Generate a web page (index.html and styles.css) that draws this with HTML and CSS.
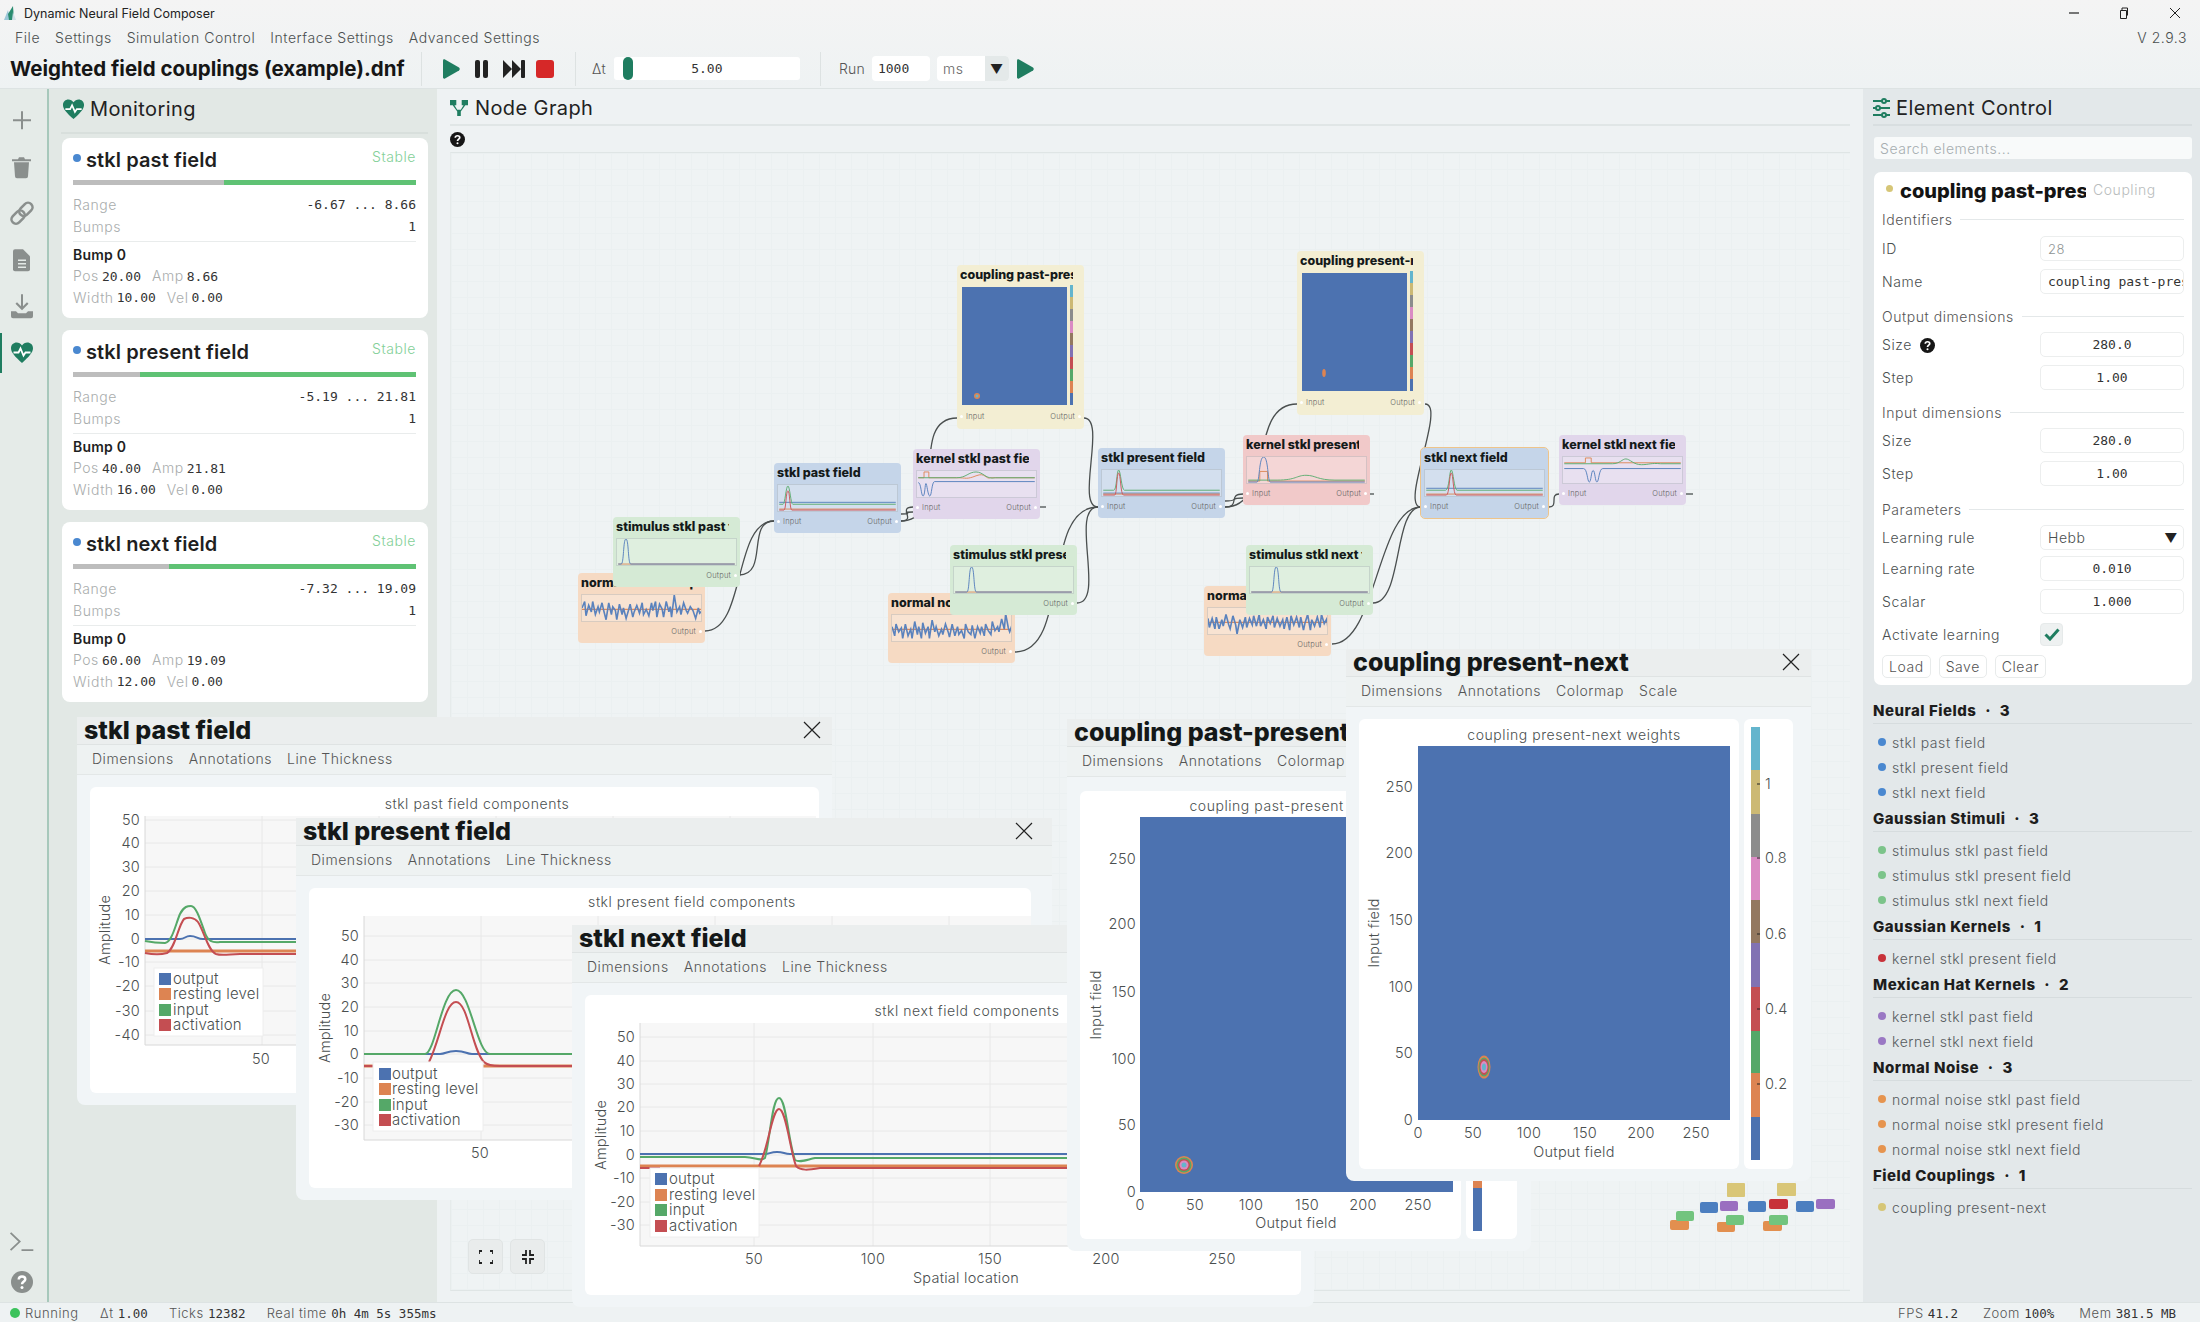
FILE: index.html
```html
<!DOCTYPE html>
<html lang="en">
<head>
    <meta charset="UTF-8">
    <title>Dynamic Neural Field Composer</title>
    <link rel="stylesheet" href="styles.css">
</head>
<body>

    <!-- Shared icons -->
    <svg class="icon-defs" width="0" height="0">
        <symbol id="i-heart" viewBox="0 0 24 24">
            <path fill="#1f7d60" d="M12 22C5 15.5 1 11.5 1 7.2 1 3.7 3.7 1.5 6.6 1.5c2.2 0 4.2 1.2 5.4 3 1.2-1.8 3.2-3 5.4-3 2.9 0 5.6 2.2 5.6 5.7C23 11.5 19 15.5 12 22z"/>
            <polyline fill="none" stroke="#fff" stroke-width="1.8" points="3.5,11.5 8.5,11.5 10.5,7.5 13.5,14.5 15.5,11.5 20.5,11.5"/>
        </symbol>
        <symbol id="i-help" viewBox="0 0 16 16">
            <circle cx="8" cy="8" r="8" fill="currentColor"/>
            <path fill="none" stroke="#fff" stroke-width="1.8" d="M5.6 6.2C5.7 4.6 6.8 4 8 4c1.4 0 2.4.8 2.4 2 0 1.6-2.4 1.7-2.4 3.6"/>
            <circle cx="8" cy="12" r="1.1" fill="#fff"/>
        </symbol>
        <symbol id="i-close" viewBox="0 0 18 18">
            <path fill="none" stroke="#222" stroke-width="1.2" d="M1 1L17 17M17 1L1 17"/>
        </symbol>
    </svg>

    <!-- Title bar -->
    <div class="titlebar">
        <svg class="app-logo" width="12" height="16" viewBox="0 0 12 16">
            <path fill="#9cc7d8" d="M0 15L4 5l2 10z"/>
            <path fill="#2a8c70" d="M4 9L9 1l1 14H5z"/>
            <path fill="#cfe0e6" d="M8 15l1-8 3 8z"/>
        </svg>
        <span class="app-name">Dynamic Neural Field Composer</span>
        <div class="window-buttons">
            <svg width="10" height="10" viewBox="0 0 10 10"><path stroke="#222" stroke-width="1.2" d="M0 5H10"/></svg>
            <svg width="10" height="12" viewBox="0 0 10 12"><path fill="none" stroke="#222" d="M1.5 3.5h6v8h-6zM3 3.5V1h5.5v7.5"/></svg>
            <svg width="12" height="12" viewBox="0 0 12 12"><path stroke="#222" d="M1 1L11 11M11 1L1 11"/></svg>
        </div>
    </div>

    <!-- Menu bar -->
    <div class="menubar">
        <span>File</span>
        <span>Settings</span>
        <span>Simulation Control</span>
        <span>Interface Settings</span>
        <span>Advanced Settings</span>
        <span class="version">V 2.9.3</span>
    </div>

    <!-- Toolbar -->
    <div class="toolbar">
        <div class="file-name">Weighted field couplings (example).dnf</div>
        <div class="tool-group transport">
            <svg width="18" height="20" viewBox="0 0 18 20"><path fill="#1f7d60" d="M1 1.5C1 .5 2 0 3 .5l14 8c1 .6 1 2.4 0 3l-14 8c-1 .5-2 0-2-1z"/></svg>
            <svg width="15" height="20" viewBox="0 0 15 20"><rect x="1" y="1" width="5" height="18" rx="2" fill="#222"/><rect x="9" y="1" width="5" height="18" rx="2" fill="#222"/></svg>
            <svg width="23" height="20" viewBox="0 0 23 20"><path fill="#222" d="M0 1l9 9-9 9zM9 1l9 9-9 9z"/><rect x="18" y="1" width="4" height="18" rx="1" fill="#222"/></svg>
            <svg class="stop-icon" width="18" height="18" viewBox="0 0 18 18"><rect width="18" height="18" rx="3" fill="#d62828"/></svg>
        </div>
        <div class="tool-group delta">
            <span class="tool-label">Δt</span>
            <div class="slider"><i class="slider-grab"></i><span class="mono">5.00</span></div>
        </div>
        <div class="tool-group run">
            <span class="tool-label">Run</span>
            <div class="field run-ms mono">1000</div>
            <div class="field run-unit"><span>ms</span><b>▼</b></div>
            <svg width="18" height="20" viewBox="0 0 18 20"><path fill="#1f7d60" d="M1 1.5C1 .5 2 0 3 .5l14 8c1 .6 1 2.4 0 3l-14 8c-1 .5-2 0-2-1z"/></svg>
        </div>
    </div>

    <div class="main">

        <!-- Icon sidebar -->
        <div class="sidebar">
            <svg class="side-icon" width="18" viewBox="0 0 18 18"><path stroke="#8a8f8d" stroke-width="2" d="M9 0V18M0 9H18"/></svg>
            <svg class="side-icon" width="19" viewBox="0 0 19 22"><path fill="#8a8f8d" d="M2 6h15l-1 14a2 2 0 0 1-2 2H5a2 2 0 0 1-2-2zM0 3h6l1-2h5l1 2h6v2H0z"/></svg>
            <svg class="side-icon" width="26" viewBox="0 0 26 24"><g transform="rotate(-45 13 12)" fill="none" stroke="#8a8f8d" stroke-width="2.6"><rect x="0" y="7.5" width="15" height="9" rx="4.5"/><rect x="11" y="7.5" width="15" height="9" rx="4.5"/></g></svg>
            <svg class="side-icon" width="17" viewBox="0 0 17 22"><path fill="#8a8f8d" d="M2 0h8l7 7v13a2 2 0 0 1-2 2H2a2 2 0 0 1-2-2V2a2 2 0 0 1 2-2z"/><path stroke="#e3e9e6" stroke-width="1.5" d="M5 11h8M5 14.5h8M5 18h8"/></svg>
            <svg class="side-icon" width="22" viewBox="0 0 22 24"><path fill="#8a8f8d" d="M10 0h2v12l4-4 1.5 1.5L11 16 4.5 9.5 6 8l4 4z"/><path fill="#8a8f8d" d="M0 17h5l2 2h8l2-2h5v5a2 2 0 0 1-2 2H2a2 2 0 0 1-2-2z"/></svg>
            <div class="side-active"><svg width="24" height="24"><use href="#i-heart"/></svg></div>
            <div class="side-spacer"></div>
            <svg class="side-term" width="25" height="20" viewBox="0 0 26 22"><path fill="none" stroke="#8a8f8d" stroke-width="2" d="M1 1l10 9.5L1 20M13 20h13"/></svg>
            <svg class="side-help" width="22" height="22"><use href="#i-help"/></svg>
        </div>

        <!-- Monitoring panel -->
        <div class="monitoring">
            <h2 class="panel-head"><svg width="23" height="23"><use href="#i-heart"/></svg>Monitoring</h2>
            <div class="mon-list">
                <div class="mon-card">
                    <div class="mon-head"><i class="dot dot-blue"></i><span class="mon-name">stkl past field</span><span class="stable">Stable</span></div>
                    <div class="mon-bar"><i style="width: 44%"></i></div>
                    <div class="mon-row first"><span>Range</span><span class="mono">-6.67 ... 8.66</span></div>
                    <div class="mon-row"><span>Bumps</span><span class="mono">1</span></div>
                    <div class="mon-bump">Bump 0</div>
                    <div class="mon-stat"><span>Pos</span><b class="mono">20.00</b><span>Amp</span><b class="mono">8.66</b></div>
                    <div class="mon-stat"><span>Width</span><b class="mono">10.00</b><span>Vel</span><b class="mono">0.00</b></div>
                </div>
                <div class="mon-card">
                    <div class="mon-head"><i class="dot dot-blue"></i><span class="mon-name">stkl present field</span><span class="stable">Stable</span></div>
                    <div class="mon-bar"><i style="width: 19.4%"></i></div>
                    <div class="mon-row first"><span>Range</span><span class="mono">-5.19 ... 21.81</span></div>
                    <div class="mon-row"><span>Bumps</span><span class="mono">1</span></div>
                    <div class="mon-bump">Bump 0</div>
                    <div class="mon-stat"><span>Pos</span><b class="mono">40.00</b><span>Amp</span><b class="mono">21.81</b></div>
                    <div class="mon-stat"><span>Width</span><b class="mono">16.00</b><span>Vel</span><b class="mono">0.00</b></div>
                </div>
                <div class="mon-card">
                    <div class="mon-head"><i class="dot dot-blue"></i><span class="mon-name">stkl next field</span><span class="stable">Stable</span></div>
                    <div class="mon-bar"><i style="width: 28%"></i></div>
                    <div class="mon-row first"><span>Range</span><span class="mono">-7.32 ... 19.09</span></div>
                    <div class="mon-row"><span>Bumps</span><span class="mono">1</span></div>
                    <div class="mon-bump">Bump 0</div>
                    <div class="mon-stat"><span>Pos</span><b class="mono">60.00</b><span>Amp</span><b class="mono">19.09</b></div>
                    <div class="mon-stat"><span>Width</span><b class="mono">12.00</b><span>Vel</span><b class="mono">0.00</b></div>
                </div>
            </div>
        </div>

        <!-- Node graph panel -->
        <div class="graph-panel">
            <h2 class="panel-head">
                <svg width="18" height="18" viewBox="0 0 20 20"><path fill="#1f7d60" d="M0 1h7v6H5l3 5h4l3-5h-2V1h7v6h-3l-5 7v5H8v-5L3 7H0z"/></svg>
                Node Graph
            </h2>
            <div class="graph-help"><svg width="15" height="15"><use href="#i-help"/></svg></div>
            <div class="canvas">
                <!-- Connections, given in page coordinates -->
                <svg class="wires" width="1400" height="1139" viewBox="450 152 1400 1139">
                    <g fill="none" stroke="#4a4f4f" stroke-width="1.3">
                        <path d="M738 574C768 574 745 520 773 520"/>
                        <path d="M704 630C745 630 732 520 773 520"/>
                        <path d="M900 520C916 520 896 506 912 506"/>
                        <path d="M900 513C916 513 896 511 912 511"/>
                        <path d="M900 520C950 520 906 417 956 417"/>
                        <path d="M1038 506H1045"/>
                        <path d="M1083 417C1106 417 1074 506 1097 506"/>
                        <path d="M1076 602C1105 602 1068 506 1097 506"/>
                        <path d="M1014 651C1070 651 1040 506 1097 506"/>
                        <path d="M1224 506C1240 506 1226 493 1242 493"/>
                        <path d="M1224 500C1240 500 1226 497 1242 497"/>
                        <path d="M1224 506C1274 506 1246 403 1296 403"/>
                        <path d="M1368 493H1373"/>
                        <path d="M1424 403C1446 403 1398 506 1420 506"/>
                        <path d="M1372 602C1402 602 1392 506 1420 506"/>
                        <path d="M1331 643C1376 643 1376 506 1420 506"/>
                        <path d="M1548 506C1558 506 1548 493 1558 493"/>
                        <path d="M1685 493H1692"/>
                    </g>
                </svg>

                <!-- Nodes -->
                <div class="node node-orange n-noise1">
                    <div class="node-title">normal noise stkl past field</div>
                    <div class="node-plot"><svg viewBox="0 3 89 20" preserveAspectRatio="none"><path class="l-orange" d="M0 14H121"/><path class="l-blue noise" d="M0 13l2-5 1 11 2-8 2 5 1-8 2 10 2-6 1 4 2-7 1 5 2 8 2-13 2 9 1-6 2 3 1 7 2-12 2 8 1-5 2 8 2-7 1-4 2 10 1-4 2-5 2 6 2-8 1 9 2-4 2 5 2-10 1 6 2-7 1 12 2-10 2 4 1 6 2-12 2 8 1-4 1 8 2-17 2 13 2-4 1 6 2-9 2 6 1 2 2-5 2 3 2 6 2-8 1 4 2-2"/></svg></div>
                    <div class="node-ports end"><span>Output</span></div>
                </div>
                <div class="node node-green n-stim1">
                    <div class="node-title">stimulus stkl past field</div>
                    <div class="node-plot"><svg viewBox="0 0 121 27"><path class="l-orange" d="M0 26H121"/><path class="l-blue" d="M0 26H3C6 26 5 0 8 0S10 26 13 26H121"/></svg></div>
                    <div class="node-ports end"><span>Output</span></div>
                </div>
                <div class="node node-blue n-past">
                    <div class="node-title">stkl past field</div>
                    <div class="node-plot"><svg viewBox="0 0 121 27"><path class="l-blue" d="M0 18H121"/><path class="l-orange" d="M0 25H121"/><path class="l-green" d="M0 20H4C6 20 7 1 9 1S12 20 14 20H121"/><path class="l-red" d="M0 26H5C7 26 7 6 9 6S11 26 13 26H121"/></svg></div>
                    <div class="node-ports"><span>Input</span><span>Output</span></div>
                </div>
                <div class="node node-purple n-kernel1">
                    <div class="node-title">kernel stkl past field</div>
                    <div class="node-plot"><svg viewBox="0 0 121 27"><path class="l-orange" d="M0 7H6V1H11V7H40C50 7 50 9 60 5S70 9 75 7H121"/><path class="l-green" d="M0 7H40C50 7 52 1 60 1S70 9 80 7H121"/><path class="l-blue" d="M0 12C3 12 3 26 5 26S7 13 8 13 10 26 12 26 14 11 17 11H121"/></svg></div>
                    <div class="node-ports"><span>Input</span><span>Output</span></div>
                </div>
                <div class="node node-yellow node-tall n-couplingA">
                    <div class="node-title">coupling past-present</div>
                    <div class="node-plot plain"><svg viewBox="0 0 119 122">
                        <rect x="1" y="2" width="105" height="118" fill="#4c72b0"/>
                        <ellipse cx="16" cy="111" rx="3" ry="3" fill="#dd8452"/><ellipse cx="16" cy="111" rx="1.5" ry="1.5" fill="#64b5cd"/>
                        <rect x="109" y="0" width="3" height="120" fill="url(#bar-grad)"/>
                    </svg></div>
                    <div class="node-ports"><span>Input</span><span>Output</span></div>
                </div>
                <div class="node node-green n-stim2">
                    <div class="node-title">stimulus stkl present field</div>
                    <div class="node-plot"><svg viewBox="0 0 121 27"><path class="l-orange" d="M0 26H121"/><path class="l-blue" d="M0 26H12C15 26 14 0 17 0S19 26 22 26H121"/></svg></div>
                    <div class="node-ports end"><span>Output</span></div>
                </div>
                <div class="node node-orange n-noise2">
                    <div class="node-title">normal noise stkl present field</div>
                    <div class="node-plot"><svg viewBox="0 3 89 20" preserveAspectRatio="none"><path class="l-orange" d="M0 14H121"/><path class="l-blue noise" d="M0 12l2 7 1-9 2 6 2-3 1 8 2-11 2 9 2-5 1 7 2-13 2 10 1-6 2 9 1-12 2 8 2-5 1 9 2-14 2 9 1-4 2 7 2-5 1 4 2-8 2 6 1 4 2-10 2 9 2-7 1 6 2-3 2 6 1-11 2 6 2 2 1-7 2 10 2-9 2 5 1-5 2 7 1-9 2 5 2 3 1-10 2 7 2-3 1 4 2-10 2 8 1-12 2 11 1 3 2-6"/></svg></div>
                    <div class="node-ports end"><span>Output</span></div>
                </div>
                <div class="node node-blue n-present">
                    <div class="node-title">stkl present field</div>
                    <div class="node-plot"><svg viewBox="0 0 121 27"><path class="l-blue" d="M0 24H121"/><path class="l-orange" d="M0 25H121"/><path class="l-green" d="M0 21H11C14 21 14 0 16 0S19 21 22 21H121"/><path class="l-red" d="M0 26H12C14 26 14 3 16 3S18 26 21 26H121"/></svg></div>
                    <div class="node-ports"><span>Input</span><span>Output</span></div>
                </div>
                <div class="node node-red n-kernel2">
                    <div class="node-title">kernel stkl present field</div>
                    <div class="node-plot"><svg viewBox="0 0 121 27"><path class="l-orange" d="M0 25H12V15H20V25H121"/><path class="l-green" d="M0 24H30C50 24 50 19 60 19S72 24 90 24H121"/><path class="l-blue" d="M0 26H9C12 26 11 0 16 0S20 26 23 26H121"/></svg></div>
                    <div class="node-ports"><span>Input</span><span>Output</span></div>
                </div>
                <div class="node node-yellow node-tall n-couplingB">
                    <div class="node-title">coupling present-next</div>
                    <div class="node-plot plain"><svg viewBox="0 0 119 122">
                        <rect x="1" y="2" width="105" height="118" fill="#4c72b0"/>
                        <ellipse cx="23" cy="102" rx="1.8" ry="4" fill="#dd8452"/>
                        <rect x="109" y="0" width="3" height="120" fill="url(#bar-grad)"/>
                    </svg></div>
                    <div class="node-ports"><span>Input</span><span>Output</span></div>
                </div>
                <div class="node node-blue node-selected n-next">
                    <div class="node-title">stkl next field</div>
                    <div class="node-plot"><svg viewBox="0 0 121 27"><path class="l-blue" d="M0 19H121"/><path class="l-orange" d="M0 25H121"/><path class="l-green" d="M0 21H20C24 21 24 0 26 0S29 21 32 21H121"/><path class="l-red" d="M0 26H21C24 26 24 3 26 3S28 26 31 26H121"/></svg></div>
                    <div class="node-ports"><span>Input</span><span>Output</span></div>
                </div>
                <div class="node node-purple n-kernel3">
                    <div class="node-title">kernel stkl next field</div>
                    <div class="node-plot"><svg viewBox="0 0 121 27"><path class="l-orange" d="M0 6H22V1H28V6H121"/><path class="l-green" d="M0 7H50C58 7 60 2 64 2S72 8 80 8 90 6 100 7H121"/><path class="l-blue" d="M0 12H20C24 12 24 26 26 26S28 14 30 14 32 26 34 26 36 12 40 12H121"/></svg></div>
                    <div class="node-ports"><span>Input</span><span>Output</span></div>
                </div>
                <div class="node node-green n-stim3">
                    <div class="node-title">stimulus stkl next field</div>
                    <div class="node-plot"><svg viewBox="0 0 121 27"><path class="l-orange" d="M0 26H121"/><path class="l-blue" d="M0 26H21C24 26 23 0 26 0S28 26 31 26H121"/></svg></div>
                    <div class="node-ports end"><span>Output</span></div>
                </div>
                <div class="node node-orange n-noise3">
                    <div class="node-title">normal noise stkl next field</div>
                    <div class="node-plot"><svg viewBox="0 3 86 20" preserveAspectRatio="none"><path class="l-orange" d="M0 14H121"/><path class="l-blue noise" d="M0 11l1 7 2-7 2 8 1-9 2 9 2-7 1 5 2-9 2 8 1 3 2-10 2 7 1 7 2-11 2 6 2-8 1 8 2-7 2 5 1-7 2 8 2-9 1 9 2-5 2 7 1-9 2 5 2-6 1 9 2-7 2 6 2-5 1 7 2-9 2 10 1-11 2 7 2-6 2 8 1-8 2 10 1-5 2-7 2 12 1-8 2 5 2-7 2 8 1-10 2 7 2-4 1 11 2-14 1 12"/></svg></div>
                    <div class="node-ports end"><span>Output</span></div>
                </div>

                <!-- Fit / collapse buttons -->
                <div class="zoom-buttons">
                    <button><svg width="14" height="14" viewBox="0 0 14 14"><path fill="none" stroke="#222" stroke-width="1.8" d="M0 4V1h3M11 1h3v3M14 10v3h-3M3 13H0v-3"/></svg></button>
                    <button><svg width="14" height="14" viewBox="0 0 14 14"><path fill="none" stroke="#222" stroke-width="1.8" d="M5 0v5H1M9 0v5h4M13 9H9v5M1 9h4v5"/></svg></button>
                </div>

                <!-- Minimap, also in page coordinates -->
                <svg class="minimap" width="190" height="60" viewBox="1660 1176 190 60">
                    <g>
                        <rect x="1726" y="1182" width="18" height="14" rx="1" fill="#d9c677"/><rect x="1776" y="1182" width="19" height="13" rx="1" fill="#d9c677"/>
                        <rect x="1699" y="1201" width="18" height="11" rx="2" fill="#4c7fc0"/><rect x="1719" y="1200" width="18" height="10" rx="2" fill="#9a6fc0"/>
                        <rect x="1747" y="1200" width="18" height="11" rx="2" fill="#4c7fc0"/><rect x="1768" y="1198" width="19" height="10" rx="2" fill="#c7323a"/>
                        <rect x="1795" y="1200" width="18" height="11" rx="2" fill="#4c7fc0"/><rect x="1815" y="1198" width="19" height="10" rx="2" fill="#9a6fc0"/>
                        <rect x="1669" y="1219" width="19" height="10" rx="2" fill="#e28f4f"/><rect x="1675" y="1210" width="18" height="10" rx="2" fill="#72c47e"/>
                        <rect x="1716" y="1221" width="18" height="10" rx="2" fill="#e28f4f"/><rect x="1725" y="1214" width="18" height="10" rx="2" fill="#72c47e"/>
                        <rect x="1762" y="1220" width="19" height="10" rx="2" fill="#e28f4f"/><rect x="1768" y="1214" width="19" height="10" rx="2" fill="#72c47e"/>
                    </g>
                </svg>
            </div>
        </div>

        <!-- Element control panel -->
        <div class="control">
            <h2 class="panel-head">
                <svg width="17" height="20" viewBox="0 0 17 20"><g stroke="#1f7d60" stroke-width="2" fill="#e3e8ea"><path d="M0 3h17M0 10h17M0 17h17"/><circle cx="11" cy="3" r="2"/><circle cx="5" cy="10" r="2"/><circle cx="11" cy="17" r="2"/></g></svg>
                Element Control
            </h2>
            <div class="search">Search elements...</div>

            <div class="ctrl-card">
                <div class="ctrl-head"><i class="dot dot-yellow"></i><span class="ctrl-name">coupling past-present</span><span class="ctrl-type">Coupling</span></div>
                <div class="ctrl-sec">Identifiers</div>
                <div class="ctrl-row"><span>ID</span><div class="field field-id">28</div></div>
                <div class="ctrl-row"><span>Name</span><div class="field field-text mono">coupling past-present</div></div>
                <div class="ctrl-sec">Output dimensions</div>
                <div class="ctrl-row"><span>Size <svg class="inline-help" width="15" height="15"><use href="#i-help"/></svg></span><div class="field field-num mono">280.0</div></div>
                <div class="ctrl-row"><span>Step</span><div class="field field-num mono">1.00</div></div>
                <div class="ctrl-sec">Input dimensions</div>
                <div class="ctrl-row"><span>Size</span><div class="field field-num mono">280.0</div></div>
                <div class="ctrl-row"><span>Step</span><div class="field field-num mono">1.00</div></div>
                <div class="ctrl-sec sec-params">Parameters</div>
                <div class="ctrl-row row-tight"><span>Learning rule</span><div class="field field-select"><span>Hebb</span><b>▼</b></div></div>
                <div class="ctrl-row"><span>Learning rate</span><div class="field field-num mono">0.010</div></div>
                <div class="ctrl-row"><span>Scalar</span><div class="field field-num mono">1.000</div></div>
                <div class="ctrl-row"><span>Activate learning</span><div class="check"><svg width="16" height="13" viewBox="0 0 16 13"><path fill="none" stroke="#1f7d60" stroke-width="3" d="M1.5 6.5L6 11 14.5 1.5"/></svg></div></div>
                <div class="ctrl-buttons"><button>Load</button><button>Save</button><button>Clear</button></div>
            </div>

            <div class="group">
                <div class="group-head">Neural Fields <i>·</i> 3</div>
                <div class="group-item"><i class="dot dot-blue"></i>stkl past field</div>
                <div class="group-item"><i class="dot dot-blue"></i>stkl present field</div>
                <div class="group-item"><i class="dot dot-blue"></i>stkl next field</div>
            </div>
            <div class="group">
                <div class="group-head">Gaussian Stimuli <i>·</i> 3</div>
                <div class="group-item"><i class="dot dot-green"></i>stimulus stkl past field</div>
                <div class="group-item"><i class="dot dot-green"></i>stimulus stkl present field</div>
                <div class="group-item"><i class="dot dot-green"></i>stimulus stkl next field</div>
            </div>
            <div class="group">
                <div class="group-head">Gaussian Kernels <i>·</i> 1</div>
                <div class="group-item"><i class="dot dot-red"></i>kernel stkl present field</div>
            </div>
            <div class="group">
                <div class="group-head">Mexican Hat Kernels <i>·</i> 2</div>
                <div class="group-item"><i class="dot dot-purple"></i>kernel stkl past field</div>
                <div class="group-item"><i class="dot dot-purple"></i>kernel stkl next field</div>
            </div>
            <div class="group">
                <div class="group-head">Normal Noise <i>·</i> 3</div>
                <div class="group-item"><i class="dot dot-orange"></i>normal noise stkl past field</div>
                <div class="group-item"><i class="dot dot-orange"></i>normal noise stkl present field</div>
                <div class="group-item"><i class="dot dot-orange"></i>normal noise stkl next field</div>
            </div>
            <div class="group">
                <div class="group-head">Field Couplings <i>·</i> 1</div>
                <div class="group-item"><i class="dot dot-yellow"></i>coupling present-next</div>
            </div>
        </div>
    </div>

    <!-- Status bar -->
    <div class="statusbar">
        <i class="status-dot"></i><span class="status-run">Running</span>
        <span class="status-item">Δt <b class="mono">1.00</b></span>
        <span class="status-item">Ticks <b class="mono">12382</b></span>
        <span class="status-item">Real time <b class="mono">0h 4m 5s 355ms</b></span>
        <div class="status-right">
            <span>FPS <b class="mono">41.2</b></span>
            <span>Zoom <b class="mono">100%</b></span>
            <span>Mem <b class="mono">381.5 MB</b></span>
        </div>
    </div>

    <!-- Floating plot windows -->
    <div class="win win-past">
        <div class="win-title"><span>stkl past field</span><svg width="18" height="18"><use href="#i-close"/></svg></div>
        <div class="win-menu"><span>Dimensions</span><span>Annotations</span><span>Line Thickness</span></div>
        <div class="win-body">
            <div class="plot-card grow">
                <svg class="chart" width="726" height="305" viewBox="90 786 726 305">
                    <text class="c-title" x="477" y="808">stkl past field components</text>
                    <rect class="plot-bg" x="145" y="815" width="671" height="229"/>
                    <path class="grid" d="M145 819H816M145 842H816M145 866H816M145 890H816M145 914H816M145 938H816M145 961H816M145 985H816M145 1010H816M145 1034H816M262 815V1044M379 815V1044M496 815V1044M613 815V1044M730 815V1044"/>
                    <path class="axis" d="M145 815V1044H816"/>
                    <g class="ticks-y"><text x="140" y="824">50</text><text x="140" y="847">40</text><text x="140" y="871">30</text><text x="140" y="895">20</text><text x="140" y="919">10</text><text x="140" y="943">0</text><text x="140" y="966">-10</text><text x="140" y="990">-20</text><text x="140" y="1015">-30</text><text x="140" y="1039">-40</text></g>
                    <text class="c-label" transform="translate(110 929) rotate(-90)">Amplitude</text>
                    <text class="c-tick" x="261" y="1063">50</text>
                    <path class="c-blue" d="M145 938H180C185 938 185 935 190 935C197 935 197 938 203 938H816"/>
                    <path class="c-orange" d="M145 950H816"/>
                    <path class="c-green" d="M145 940C150 941 155 942 165 942C172 941 175 925 180 913C184 905 188 905 191 905C196 905 200 918 205 932C208 940 212 942 220 941H816"/>
                    <path class="c-red" d="M145 952C155 954 160 954 167 952C175 948 178 925 184 918C188 916 194 916 198 921C204 930 208 950 216 953C222 955 230 953 240 953H816"/>
                    <rect class="legend" x="154" y="967" width="109" height="68"/>
                    <rect x="159" y="972" width="12" height="12" fill="#4c72b0"/><rect x="159" y="987" width="12" height="12" fill="#dd8452"/><rect x="159" y="1003" width="12" height="12" fill="#55a868"/><rect x="159" y="1018" width="12" height="12" fill="#c44e52"/>
                    <g class="legend-text"><text x="173" y="983">output</text><text x="173" y="998">resting level</text><text x="173" y="1014">input</text><text x="173" y="1029">activation</text></g>
                </svg>
            </div>
        </div>
    </div>

    <div class="win win-present">
        <div class="win-title"><span>stkl present field</span><svg width="18" height="18"><use href="#i-close"/></svg></div>
        <div class="win-menu"><span>Dimensions</span><span>Annotations</span><span>Line Thickness</span></div>
        <div class="win-body">
            <div class="plot-card grow">
                <svg class="chart" width="722" height="300" viewBox="309 888 722 300">
                    <text class="c-title" x="692" y="907">stkl present field components</text>
                    <rect class="plot-bg" x="364" y="916" width="667" height="224"/>
                    <path class="grid" d="M364 936H1031M364 960H1031M364 983H1031M364 1007H1031M364 1031H1031M364 1054H1031M364 1078H1031M364 1102H1031M364 1125H1031M481 916V1140M598 916V1140M715 916V1140M832 916V1140M949 916V1140"/>
                    <path class="axis" d="M364 916V1140H1031"/>
                    <g class="ticks-y"><text x="359" y="941">50</text><text x="359" y="965">40</text><text x="359" y="988">30</text><text x="359" y="1012">20</text><text x="359" y="1036">10</text><text x="359" y="1059">0</text><text x="359" y="1083">-10</text><text x="359" y="1107">-20</text><text x="359" y="1130">-30</text></g>
                    <text class="c-label" transform="translate(330 1028) rotate(-90)">Amplitude</text>
                    <text class="c-tick" x="480" y="1158">50</text>
                    <path class="c-blue" d="M364 1054H440C446 1054 446 1051 456 1051C466 1051 466 1054 472 1054H1031"/>
                    <path class="c-orange" d="M364 1066H1031"/>
                    <path class="c-red" d="M364 1066H380M429 1062C440 1040 445 1002 456 1002C468 1002 472 1050 484 1062C488 1066 495 1066 500 1066H1031"/>
                    <path class="c-green" d="M364 1054H425C435 1054 442 990 456 990C470 990 477 1054 490 1054H1031"/>
                    <rect class="legend" x="373" y="1062" width="110" height="69"/>
                    <rect x="379" y="1068" width="12" height="12" fill="#4c72b0"/><rect x="379" y="1083" width="12" height="12" fill="#dd8452"/><rect x="379" y="1099" width="12" height="12" fill="#55a868"/><rect x="379" y="1114" width="12" height="12" fill="#c44e52"/>
                    <g class="legend-text"><text x="392" y="1079">output</text><text x="392" y="1094">resting level</text><text x="392" y="1110">input</text><text x="392" y="1125">activation</text></g>
                </svg>
            </div>
        </div>
    </div>

    <div class="win win-next">
        <div class="win-title"><span>stkl next field</span><svg width="18" height="18"><use href="#i-close"/></svg></div>
        <div class="win-menu"><span>Dimensions</span><span>Annotations</span><span>Line Thickness</span></div>
        <div class="win-body">
            <div class="plot-card grow">
                <svg class="chart" width="716" height="298" viewBox="585 995 716 298">
                    <text class="c-title" x="967" y="1016">stkl next field components</text>
                    <rect class="plot-bg" x="640" y="1023" width="647" height="223"/>
                    <path class="grid" d="M640 1037H1287M640 1061H1287M640 1084H1287M640 1107H1287M640 1131H1287M640 1155H1287M640 1178H1287M640 1202H1287M640 1225H1287M754 1023V1246M873 1023V1246M990 1023V1246M1106 1023V1246M1222 1023V1246"/>
                    <path class="axis" d="M640 1023V1246H1287"/>
                    <g class="ticks-y"><text x="635" y="1042">50</text><text x="635" y="1066">40</text><text x="635" y="1089">30</text><text x="635" y="1112">20</text><text x="635" y="1136">10</text><text x="635" y="1160">0</text><text x="635" y="1183">-10</text><text x="635" y="1207">-20</text><text x="635" y="1230">-30</text></g>
                    <text class="c-label" transform="translate(606 1135) rotate(-90)">Amplitude</text>
                    <g class="c-tick"><text x="754" y="1264">50</text><text x="873" y="1264">100</text><text x="990" y="1264">150</text><text x="1106" y="1264">200</text><text x="1222" y="1264">250</text></g>
                    <text class="c-label" x="966" y="1283">Spatial location</text>
                    <path class="c-blue" d="M640 1154H765C770 1154 770 1152 777 1152C784 1152 784 1154 790 1154H1287"/>
                    <path class="c-orange" d="M640 1166H1287"/>
                    <path class="c-green" d="M640 1157H745C755 1157 760 1162 765 1158C770 1140 772 1098 779 1098C786 1098 788 1140 795 1160C800 1163 806 1160 815 1158H1287"/>
                    <path class="c-red" d="M640 1168H660M759 1166C768 1150 772 1109 779 1109C786 1109 790 1150 796 1166C801 1171 808 1170 820 1168H1287"/>
                    <rect class="legend" x="650" y="1168" width="109" height="69"/>
                    <rect x="655" y="1173" width="12" height="12" fill="#4c72b0"/><rect x="655" y="1189" width="12" height="12" fill="#dd8452"/><rect x="655" y="1204" width="12" height="12" fill="#55a868"/><rect x="655" y="1220" width="12" height="12" fill="#c44e52"/>
                    <g class="legend-text"><text x="669" y="1184">output</text><text x="669" y="1200">resting level</text><text x="669" y="1215">input</text><text x="669" y="1231">activation</text></g>
                </svg>
            </div>
        </div>
    </div>

    <div class="win win-coupling-a">
        <div class="win-title"><span>coupling past-present</span><svg width="18" height="18"><use href="#i-close"/></svg></div>
        <div class="win-menu"><span>Dimensions</span><span>Annotations</span><span>Colormap</span><span>Scale</span></div>
        <div class="win-body">
            <div class="plot-card">
                <svg class="chart" width="381" height="448" viewBox="1080 791 381 448">
                    <text class="c-title" x="1296" y="811">coupling past-present weights</text>
                    <rect x="1140" y="817" width="313" height="375" fill="#4c72b0"/>
                    <ellipse cx="1184" cy="1165" rx="9" ry="9" fill="#dd8452"/><ellipse cx="1184" cy="1165" rx="7.5" ry="7.5" fill="#55a868"/><ellipse cx="1184" cy="1165" rx="6" ry="6" fill="#c44e52"/><ellipse cx="1184" cy="1165" rx="4.5" ry="4.5" fill="#da8bc3"/><ellipse cx="1184" cy="1165" rx="2.5" ry="2.5" fill="#64b5cd"/>
                    <g class="ticks-y"><text x="1136" y="864">250</text><text x="1136" y="929">200</text><text x="1136" y="997">150</text><text x="1136" y="1064">100</text><text x="1136" y="1130">50</text><text x="1136" y="1197">0</text></g>
                    <g class="c-tick"><text x="1140" y="1210">0</text><text x="1195" y="1210">50</text><text x="1251" y="1210">100</text><text x="1307" y="1210">150</text><text x="1363" y="1210">200</text><text x="1418" y="1210">250</text></g>
                    <text class="c-label" x="1296" y="1228">Output field</text>
                    <text class="c-label" transform="translate(1101 1005) rotate(-90)">Input field</text>
                </svg>
            </div>
            <div class="plot-card">
                <svg class="chart" width="51" height="448" viewBox="1466 791 51 448">
                    <g>
                        <rect x="1473" y="801" width="9" height="43" fill="#64b5cd"/><rect x="1473" y="844" width="9" height="43" fill="#ccb974"/><rect x="1473" y="887" width="9" height="43" fill="#8c8c8c"/><rect x="1473" y="930" width="9" height="43" fill="#da8bc3"/><rect x="1473" y="973" width="9" height="43" fill="#937860"/><rect x="1473" y="1016" width="9" height="43" fill="#8172b3"/><rect x="1473" y="1059" width="9" height="43" fill="#c44e52"/><rect x="1473" y="1102" width="9" height="43" fill="#55a868"/><rect x="1473" y="1145" width="9" height="43" fill="#dd8452"/><rect x="1473" y="1188" width="9" height="43" fill="#4c72b0"/>
                    </g>
                </svg>
            </div>
        </div>
    </div>

    <div class="win win-coupling-b">
        <div class="win-title"><span>coupling present-next</span><svg width="18" height="18"><use href="#i-close"/></svg></div>
        <div class="win-menu"><span>Dimensions</span><span>Annotations</span><span>Colormap</span><span>Scale</span></div>
        <div class="win-body">
            <div class="plot-card">
                <svg class="chart" width="380" height="449" viewBox="1360 720 380 449">
                    <text class="c-title" x="1575" y="741">coupling present-next weights</text>
                    <rect x="1419" y="747" width="312" height="374" fill="#4c72b0"/>
                    <ellipse cx="1485" cy="1068" rx="6.5" ry="11.5" fill="#dd8452"/><ellipse cx="1485" cy="1068" rx="5.5" ry="9.5" fill="#55a868"/><ellipse cx="1485" cy="1068" rx="4.5" ry="8" fill="#c44e52"/><ellipse cx="1485" cy="1068" rx="3.5" ry="6" fill="#da8bc3"/><ellipse cx="1485" cy="1068" rx="2" ry="3.5" fill="#64b5cd"/>
                    <g class="ticks-y"><text x="1414" y="793">250</text><text x="1414" y="859">200</text><text x="1414" y="926">150</text><text x="1414" y="993">100</text><text x="1414" y="1059">50</text><text x="1414" y="1126">0</text></g>
                    <g class="c-tick"><text x="1419" y="1139">0</text><text x="1474" y="1139">50</text><text x="1530" y="1139">100</text><text x="1586" y="1139">150</text><text x="1642" y="1139">200</text><text x="1697" y="1139">250</text></g>
                    <text class="c-label" x="1575" y="1158">Output field</text>
                    <text class="c-label" transform="translate(1380 934) rotate(-90)">Input field</text>
                </svg>
            </div>
            <div class="plot-card">
                <svg class="chart" width="49" height="449" viewBox="1745 720 49 449">
                    <rect x="1752" y="728" width="9" height="43" fill="#64b5cd"/><rect x="1752" y="771" width="9" height="44" fill="#ccb974"/><rect x="1752" y="815" width="9" height="43" fill="#8c8c8c"/><rect x="1752" y="858" width="9" height="43" fill="#da8bc3"/><rect x="1752" y="901" width="9" height="43" fill="#937860"/><rect x="1752" y="944" width="9" height="44" fill="#8172b3"/><rect x="1752" y="988" width="9" height="44" fill="#c44e52"/><rect x="1752" y="1032" width="9" height="42" fill="#55a868"/><rect x="1752" y="1074" width="9" height="44" fill="#dd8452"/><rect x="1752" y="1118" width="9" height="43" fill="#4c72b0"/>
                    <g class="bar-ticks"><text x="1766" y="790">1</text><text x="1766" y="864">0.8</text><text x="1766" y="940">0.6</text><text x="1766" y="1015">0.4</text><text x="1766" y="1090">0.2</text></g>
                    <path stroke="#222" d="M1758 785h3M1758 859h3M1758 935h3M1758 1010h3M1758 1085h3"/>
                </svg>
            </div>
        </div>
    </div>

    <!-- Stripe used by the colour bars inside the coupling nodes -->
    <svg class="icon-defs" width="0" height="0">
        <defs>
            <linearGradient id="bar-grad" x1="0" y1="0" x2="0" y2="1">
                <stop offset="0" stop-color="#64b5cd"/><stop offset=".1" stop-color="#64b5cd"/>
                <stop offset=".1" stop-color="#ccb974"/><stop offset=".2" stop-color="#ccb974"/>
                <stop offset=".2" stop-color="#8c8c8c"/><stop offset=".3" stop-color="#8c8c8c"/>
                <stop offset=".3" stop-color="#da8bc3"/><stop offset=".4" stop-color="#da8bc3"/>
                <stop offset=".4" stop-color="#937860"/><stop offset=".5" stop-color="#937860"/>
                <stop offset=".5" stop-color="#8172b3"/><stop offset=".6" stop-color="#8172b3"/>
                <stop offset=".6" stop-color="#c44e52"/><stop offset=".7" stop-color="#c44e52"/>
                <stop offset=".7" stop-color="#55a868"/><stop offset=".8" stop-color="#55a868"/>
                <stop offset=".8" stop-color="#dd8452"/><stop offset=".9" stop-color="#dd8452"/>
                <stop offset=".9" stop-color="#4c72b0"/><stop offset="1" stop-color="#4c72b0"/>
            </linearGradient>
        </defs>
    </svg>

</body>
</html>
```

FILE: styles.css
```css
/* General styles */
* {
    box-sizing: border-box;
}

body {
    position: relative;
    display: flex;
    flex-direction: column;
    width: 2200px;
    height: 1322px;
    margin: 0;
    overflow: hidden;
    font-family: Inter, "Liberation Sans", sans-serif;
    font-weight: 300;
    font-size: 14px;
    letter-spacing: 0.55px;
    color: #4a4f4f;
    background: linear-gradient(#f4f4f4, #eef2f3 90px);
}

.mono {
    font-family: "DejaVu Sans Mono", "Liberation Mono", monospace;
    font-weight: 400;
    font-size: 13px;
    letter-spacing: 0;
    color: #333;
}

.icon-defs {
    position: absolute;
}

.dot {
    display: inline-block;
    flex: none;
    width: 8px;
    height: 8px;
    border-radius: 50%;
}

.dot-blue { background: #4a88d0; }
.dot-green { background: #7cc48a; }
.dot-red { background: #c8323a; }
.dot-purple { background: #9a78c4; }
.dot-orange { background: #e6944f; }
.dot-yellow { background: #d6c677; }

/* Top bars */
.titlebar {
    display: flex;
    align-items: center;
    flex: none;
    height: 26px;
    padding-left: 4px;
    color: #222;
}

.app-name {
    margin-left: 8px;
    font-size: 12.5px;
    font-weight: 400;
    letter-spacing: 0;
}

.window-buttons {
    display: flex;
    align-items: center;
    gap: 40px;
    margin-left: auto;
    padding-right: 19px;
}

.menubar {
    display: flex;
    align-items: center;
    flex: none;
    gap: 15px;
    height: 26px;
    padding: 0 13px 3px 15px;
    font-size: 14px;
}

.version {
    margin-left: auto;
}

.toolbar {
    display: flex;
    align-items: center;
    flex: none;
    height: 36px;
    padding-left: 10px;
    padding-bottom: 3px;
}

.file-name {
    width: 411px;
    font-size: 20.5px;
    font-weight: 700;
    letter-spacing: 0;
    color: #161616;
}

.tool-group {
    display: flex;
    align-items: center;
    height: 34px;
    border-left: 1px solid #dde2e2;
}

.transport {
    width: 154px;
    gap: 14px;
    padding-left: 20px;
}

.stop-icon {
    margin-left: -4px;
}

.delta {
    width: 245px;
    gap: 8px;
    padding-left: 16px;
}

.run {
    gap: 7px;
    padding-left: 18px;
}

.tool-label {
    font-size: 14px;
    letter-spacing: 0.2px;
    color: #555;
}

.slider {
    position: relative;
    display: flex;
    align-items: center;
    justify-content: center;
    width: 186px;
    height: 23px;
    background: #fff;
    border-radius: 3px;
}

.slider-grab {
    position: absolute;
    left: 9px;
    width: 10px;
    height: 23px;
    background: #1f7d60;
    border-radius: 5px;
}

.field {
    display: flex;
    align-items: center;
    background: #fff;
    border-radius: 4px;
}

.run-ms {
    width: 58px;
    height: 25px;
    padding-left: 6px;
}

.run-unit {
    justify-content: space-between;
    width: 72px;
    height: 25px;
    padding-left: 6px;
    color: #666;
}

.run-unit b {
    display: flex;
    align-items: center;
    justify-content: center;
    width: 24px;
    height: 25px;
    font-size: 13px;
    color: #222;
    background: #e4e9e9;
    border-radius: 0 4px 4px 0;
}

/* Main layout */
.main {
    display: flex;
    flex: 1;
    min-height: 0;
    border-top: 1px solid #dde3e3;
}

.panel-head {
    display: flex;
    align-items: center;
    gap: 7px;
    margin: 0;
    font-size: 20px;
    font-weight: 400;
    letter-spacing: 0.4px;
    color: #222;
}

.sidebar {
    display: flex;
    flex-direction: column;
    align-items: center;
    flex: none;
    width: 49px;
    padding: 8px 4px 9px 0;
    background: #e5ebe8;
    border-right: 2px solid #a7c8bb;
}

/* Fixed height slots, the icon stays centred through its viewBox */
.side-icon {
    height: 46.5px;
    flex: none;
}

.side-active {
    position: relative;
    display: flex;
    align-items: center;
    justify-content: center;
    flex: none;
    width: 100%;
    height: 46.5px;
}

.side-active::before {
    content: "";
    position: absolute;
    left: 0;
    top: 3px;
    width: 2px;
    height: 40px;
    background: #1f7d60;
}

.side-spacer {
    flex: 1;
}

.side-term {
    margin-bottom: 19px;
}

.side-help {
    color: #8a8f8d;
}

/* Monitoring panel */
.monitoring {
    flex: none;
    width: 388px;
    padding: 0 9px 0 12px;
    background: #e2e8e5;
}

.monitoring .panel-head {
    height: 45px;
    gap: 5px;
    padding-bottom: 3px;
    border-bottom: 2px solid #d8dfdc;
}

.monitoring .panel-head svg {
    margin-left: 1px;
}

.mon-list {
    display: flex;
    flex-direction: column;
    gap: 12px;
    margin-top: 4px;
    margin-left: 1px;
}

.mon-card {
    height: 180px;
    padding: 7px 12px 0 11px;
    background: #fff;
    border-radius: 8px;
}

.mon-head {
    display: flex;
    align-items: center;
    gap: 5px;
    height: 30px;
}

.mon-head .dot {
    margin-top: -5px;
}

.mon-name {
    font-size: 20px;
    font-weight: 600;
    letter-spacing: 0.1px;
    color: #1f1f1f;
}

.stable {
    margin-left: auto;
    margin-top: -7px;
    font-size: 14px;
    color: #84d098;
}

.mon-bar {
    height: 5px;
    margin-top: 5px;
    background: #5fc274;
}

.mon-bar i {
    display: block;
    height: 5px;
    background: #bdbdbd;
}

.mon-row {
    display: flex;
    align-items: center;
    justify-content: space-between;
    height: 22px;
    color: #a9adad;
}

.mon-row.first {
    margin-top: 8px;
}

.mon-bump {
    height: 24px;
    margin-top: 4px;
    padding-top: 4px;
    font-weight: 600;
    letter-spacing: 0.2px;
    color: #1f1f1f;
    border-top: 1px solid #e9ecec;
}

.mon-stat {
    display: flex;
    align-items: center;
    height: 21.5px;
    color: #a9adad;
}

.mon-stat b {
    margin: 1px 11px 0 3px;
}

/* Node graph panel */
.graph-panel {
    display: flex;
    flex-direction: column;
    flex: 1;
    min-width: 0;
    padding: 0 13px 11px 13px;
    background: #eef2f3;
}

.graph-panel .panel-head {
    height: 37px;
    flex: none;
    padding-top: 3px;
    border-bottom: 2px solid #e0e6e6;
}

.graph-help {
    display: flex;
    align-items: center;
    flex: none;
    height: 26px;
    color: #161616;
}

.canvas {
    position: relative;
    flex: 1;
    background-color: #eff3f4;
    background-image: linear-gradient(#ebf0f1 1px, transparent 1px), linear-gradient(90deg, #ebf0f1 1px, transparent 1px);
    background-size: 16px 16px;
    border-top: 1px solid #dfe5e5;
    border-bottom: 1px solid #dfe5e5;
    border-left: 1px solid #e6ebeb;
}

.wires {
    position: absolute;
    left: 0;
    top: 0;
}

/* Nodes */
.node {
    position: absolute;
    width: 127px;
    height: 70px;
    padding: 3px 3px 0;
    border-radius: 4px;
}

.node-tall {
    height: 164px;
}

.node-blue { background: #c5d5e9; }
.node-green { background: #d5ead5; z-index: 1; }
.node-orange { background: #f6dac3; }
.node-purple { background: #e1d6eb; }
.node-yellow { background: #f3eed3; }
.node-red { background: #f1c9c9; }

.node-selected {
    outline: 1px solid #eec48a;
}

.node-title {
    width: 113px;
    height: 15px;
    overflow: hidden;
    font-size: 12.5px;
    font-weight: 800;
    line-height: 13px;
    letter-spacing: 0;
    white-space: nowrap;
    color: #141a1a;
}

.node-plot {
    height: 28px;
    margin-top: 3px;
    background: rgba(255, 255, 255, 0.25);
    border: 1px solid rgba(120, 130, 140, 0.25);
}

.node-plot svg {
    display: block;
    width: 100%;
    height: 100%;
}

.node-plot.plain {
    height: 122px;
    margin-top: 2px;
    background: none;
    border: 0;
}

.node-plot path {
    fill: none;
    stroke-width: 1;
}

.node-plot path.noise {
    stroke-width: 1.2;
}

.l-blue { stroke: #5a82bd; }
.l-orange { stroke: #de8a5c; }
.l-green { stroke: #5fae73; }
.l-red { stroke: #cc5a5e; }

.node-ports {
    display: flex;
    justify-content: space-between;
    padding: 5px 6px 0;
    font-size: 7.5px;
    letter-spacing: 0.2px;
    color: #666;
}

.node-ports span {
    position: relative;
}

.node-ports span:first-child::before,
.node-ports span:last-child::after {
    content: "";
    position: absolute;
    top: 3px;
    width: 3px;
    height: 3px;
    background: #fff;
    border-radius: 50%;
}

.node-ports span:first-child::before {
    left: -6px;
}

.node-ports span:last-child::after {
    right: -6px;
}

.node-ports.end {
    justify-content: flex-end;
}

.node-ports.end span::before {
    display: none;
}

.n-noise1 { left: 127px; top: 420px; }
.n-stim1 { left: 162px; top: 364px; }
.n-past { left: 323px; top: 310px; }
.n-kernel1 { left: 462px; top: 296px; }
.n-couplingA { left: 506px; top: 112px; }
.n-noise2 { left: 437px; top: 440px; }
.n-stim2 { left: 499px; top: 392px; }
.n-present { left: 647px; top: 295px; }
.n-kernel2 { left: 792px; top: 282px; }
.n-couplingB { left: 846px; top: 98px; }
.n-next { left: 970px; top: 295px; }
.n-kernel3 { left: 1108px; top: 282px; }
.n-noise3 { left: 753px; top: 433px; }
.n-stim3 { left: 795px; top: 392px; }

.zoom-buttons {
    position: absolute;
    left: 17px;
    bottom: 16px;
    display: flex;
    gap: 7px;
}

.zoom-buttons button {
    display: flex;
    align-items: center;
    justify-content: center;
    width: 35px;
    height: 35px;
    padding: 0;
    background: #e9ecec;
    border: 1px solid #e0e4e4;
    border-radius: 5px;
}

.minimap {
    position: absolute;
    left: 1210px;
    top: 1024px;
}

/* Element control panel */
.control {
    flex: none;
    width: 337px;
    padding: 0 8px 0 10px;
    background: #e3e8ea;
}

.control .panel-head {
    height: 37px;
    gap: 6px;
    padding-top: 2px;
    border-bottom: 2px solid #d8dee0;
}

.search {
    display: flex;
    align-items: center;
    height: 22px;
    margin: 11px 0 0 1px;
    padding-left: 6px;
    color: #a6adb0;
    background: #f8fafa;
    border-radius: 3px;
}

.ctrl-card {
    display: flex;
    flex-direction: column;
    gap: 8px;
    height: 513px;
    margin: 13px 0 0 1px;
    padding: 7px 8px 0;
    background: #fff;
    border-radius: 7px;
}

.ctrl-head {
    display: flex;
    align-items: center;
    height: 24px;
    padding-left: 4px;
    overflow: hidden;
    white-space: nowrap;
}

.ctrl-head .dot {
    width: 7px;
    height: 7px;
    margin: -5px 7px 0 0;
}

.ctrl-name {
    width: 186px;
    overflow: hidden;
    font-size: 20px;
    font-weight: 800;
    letter-spacing: 0;
    color: #141414;
}

.ctrl-type {
    margin: -4px 0 0 7px;
    color: #b9bdbd;
}

.ctrl-sec {
    display: flex;
    align-items: center;
    gap: 8px;
    height: 20px;
    margin-top: 4px;
    margin-bottom: -2px;
    color: #555;
}

.ctrl-sec::after {
    content: "";
    flex: 1;
    height: 1px;
    background: #e4e8e9;
}

.ctrl-head + .ctrl-sec {
    margin-top: -2px;
    margin-bottom: -1px;
}

.sec-params {
    margin-top: 5px;
}

.ctrl-row {
    display: grid;
    grid-template-columns: 158px 144px;
    align-items: center;
    height: 25px;
}

.row-tight {
    margin-bottom: -2px;
}

.field-id,
.field-text,
.field-num,
.field-select {
    height: 25px;
    padding-left: 7px;
    overflow: hidden;
    white-space: nowrap;
    border: 1px solid #eceeee;
    border-radius: 5px;
}

.field-id {
    color: #8f9595;
    font-size: 13px;
}

.field-num {
    justify-content: center;
    padding-left: 0;
}

.field-select {
    justify-content: space-between;
    padding-right: 5px;
}

.field-select b {
    font-size: 13px;
    color: #222;
}

.inline-help {
    margin-left: 4px;
    color: #161616;
    vertical-align: -3px;
}

.check {
    display: flex;
    align-items: center;
    justify-content: center;
    width: 23px;
    height: 23px;
    background: #eef1f1;
    border: 1px solid #e6eaea;
    border-radius: 4px;
}

.ctrl-buttons {
    display: flex;
    gap: 8px;
}

.ctrl-buttons button {
    height: 23px;
    padding: 0 6px;
    font: inherit;
    letter-spacing: 0.55px;
    color: #555;
    background: #fff;
    border: 1px solid #e8ebeb;
    border-radius: 5px;
}

.group {
    margin-bottom: 1.5px;
}

.ctrl-card + .group {
    margin-top: 13px;
}

.group-head {
    height: 26px;
    font-size: 15px;
    font-weight: 800;
    line-height: 26px;
    letter-spacing: 0.5px;
    color: #1d1d1d;
    border-bottom: 1px solid #d6dcde;
}

.group-head i {
    margin: 0 5px;
    font-style: normal;
}

.group-head + .group-item {
    margin-top: 5.5px;
}

.group-item {
    display: flex;
    align-items: center;
    gap: 6px;
    height: 25px;
    padding-left: 5px;
    color: #565b5e;
}

/* Status bar */
.statusbar {
    display: flex;
    align-items: center;
    flex: none;
    height: 20px;
    padding: 1px 0 0 10px;
    overflow: hidden;
    font-size: 13px;
    color: #555;
    border-top: 1px solid #dde3e3;
}

.status-dot {
    width: 10px;
    height: 10px;
    background: #3cc25c;
    border-radius: 50%;
}

.status-run {
    width: 75px;
    margin-left: 5px;
}

.status-item {
    margin-right: 21px;
}

.statusbar b {
    font-size: 12.5px;
}

.status-right {
    display: flex;
    gap: 25px;
    margin-left: auto;
    padding-right: 24px;
}

/* Floating plot windows */
.win {
    position: absolute;
    display: flex;
    flex-direction: column;
    background: #f1f5f7;
    border-radius: 0 0 8px 8px;
}

.win-past { left: 77px; top: 717px; width: 755px; height: 388px; z-index: 1; }
.win-present { left: 296px; top: 818px; width: 756px; height: 382px; z-index: 2; }
.win-next { left: 572px; top: 925px; width: 742px; height: 382px; z-index: 3; }
.win-coupling-a { left: 1067px; top: 719px; width: 464px; height: 532px; z-index: 4; }
.win-coupling-b { left: 1346px; top: 649px; width: 465px; height: 532px; z-index: 5; }

.win-title {
    display: flex;
    align-items: center;
    justify-content: space-between;
    flex: none;
    height: 28px;
    padding: 0 11px 2px 7px;
    background: #ebeeee;
    border-bottom: 1px solid #dfe3e3;
}

.win-present .win-title {
    padding-right: 19px;
}

.win-title span {
    font-size: 25px;
    font-weight: 800;
    letter-spacing: 0;
    color: #141818;
}

.win-menu {
    display: flex;
    align-items: center;
    flex: none;
    gap: 15px;
    height: 30px;
    padding: 0 0 3px 15px;
    font-size: 14px;
    color: #555;
    background: #eef2f2;
    border-bottom: 1px solid #e3e7e7;
}

.win-body {
    display: flex;
    flex: 1;
    gap: 5px;
    min-height: 0;
    padding: 12px 13px;
}

.win-present .win-body {
    padding-right: 21px;
}

.win-coupling-a .win-body {
    padding-top: 14px;
}

.plot-card {
    flex: none;
    background: #fff;
    border-radius: 6px;
    overflow: hidden;
}

.plot-card.grow {
    flex: 1;
}

.chart {
    display: block;
}

.chart text {
    font-family: Inter, "Liberation Sans", sans-serif;
    font-weight: 300;
    font-size: 14.5px;
    letter-spacing: 0.25px;
    fill: #4a4f4f;
}

.chart .c-title {
    font-size: 14px;
    letter-spacing: 0.55px;
    text-anchor: middle;
}

.chart .c-label {
    text-anchor: middle;
}

.chart .c-tick,
.c-tick text {
    text-anchor: middle;
}

.ticks-y text {
    text-anchor: end;
}

.plot-bg {
    fill: #f7f7f7;
}

.grid {
    fill: none;
    stroke: #e8e8e8;
    stroke-width: 1;
}

.axis {
    fill: none;
    stroke: #d8d8d8;
    stroke-width: 1;
}

.c-blue,
.c-orange,
.c-green,
.c-red {
    fill: none;
    stroke-width: 2;
}

.c-blue { stroke: #4c72b0; }
.c-orange { stroke: #dd8452; stroke-width: 3; }
.c-green { stroke: #55a868; }
.c-red { stroke: #c44e52; }

.legend {
    fill: #fff;
    stroke: #eeeeee;
}

.chart .legend-text text {
    font-size: 15px;
    letter-spacing: 0.2px;
}
```
